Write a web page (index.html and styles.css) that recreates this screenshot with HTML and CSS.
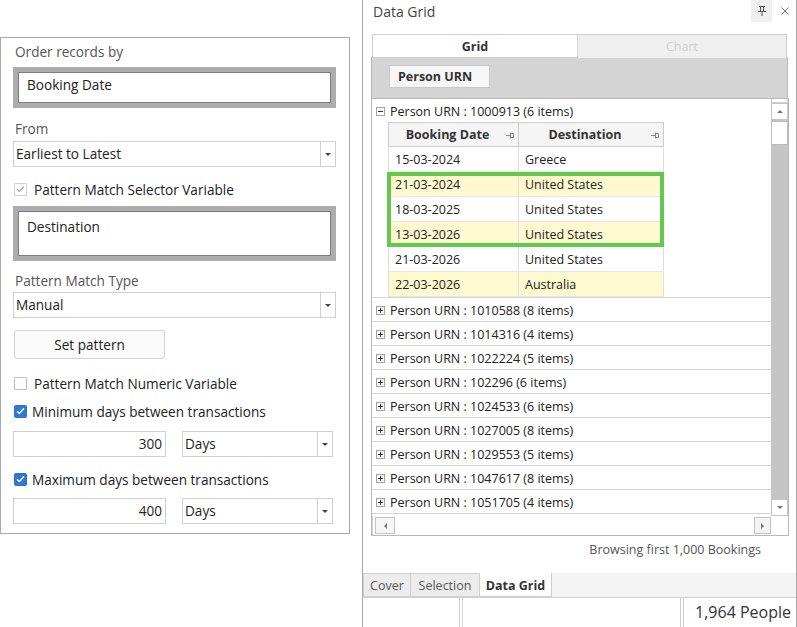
FILE: index.html
```html
<!DOCTYPE html>
<html lang="en">
<head>
    <meta charset="UTF-8">
    <title>Pattern Match - Data Grid</title>
    <link rel="stylesheet" href="styles.css">
</head>
<body>
    <div class="options">
        <div class="label first">Order records by</div>
        <div class="pick-box">Booking Date</div>
        <div class="label from">From</div>
        <div class="combo tight"><span class="combo-text">Earliest to Latest</span><span class="combo-btn"><i class="caret"></i></span></div>
        <div class="check-row selector">
            <span class="check muted"><svg width="9" height="8" viewBox="0 0 9 8"><path d="M1 4.2l2.4 2.3L8 1.3" fill="none" stroke="#9a9a9a" stroke-width="1.1"/></svg></span>
            <span class="check-label">Pattern Match Selector Variable</span>
        </div>
        <div class="pick-box tall">Destination</div>
        <div class="label">Pattern Match Type</div>
        <div class="combo tighter"><span class="combo-text">Manual</span><span class="combo-btn"><i class="caret"></i></span></div>
        <div class="set-pattern">Set pattern</div>
        <div class="check-row numeric">
            <span class="check"></span>
            <span class="check-label">Pattern Match Numeric Variable</span>
        </div>
        <div class="check-row">
            <span class="check on"><svg width="9" height="8" viewBox="0 0 9 8"><path d="M1 4.2l2.4 2.3L8 1.3" fill="none" stroke="#fff" stroke-width="1.3"/></svg></span>
            <span class="check-label near">Minimum days between transactions</span>
        </div>
        <div class="num-row">
            <div class="num">300</div>
            <div class="combo"><span class="combo-text">Days</span><span class="combo-btn"><i class="caret"></i></span></div>
        </div>
        <div class="check-row max">
            <span class="check on"><svg width="9" height="8" viewBox="0 0 9 8"><path d="M1 4.2l2.4 2.3L8 1.3" fill="none" stroke="#fff" stroke-width="1.3"/></svg></span>
            <span class="check-label near">Maximum days between transactions</span>
        </div>
        <div class="num-row last">
            <div class="num">400</div>
            <div class="combo"><span class="combo-text">Days</span><span class="combo-btn"><i class="caret"></i></span></div>
        </div>
    </div>

    <div class="window">
        <div class="title-bar">
            <span class="title">Data Grid</span>
            <span class="pin-btn"><svg width="8" height="10" viewBox="0 0 8 10"><path d="M1 0.5h6M2.5 0.5v5M5.5 0.5v5M0 5.5h8M4 5.5V10" fill="none" stroke="#555" stroke-width="1"/></svg></span>
            <span class="close-btn"><svg width="8" height="8" viewBox="0 0 8 8"><path d="M0.5 0.5l7 7M7.5 0.5l-7 7" stroke="#777" stroke-width="1"/></svg></span>
        </div>
        <div class="dg-body">
            <div class="view-tabs">
                <div class="view-tab active">Grid</div>
                <div class="view-tab">Chart</div>
            </div>
            <div class="group-panel">
                <span class="group-chip">Person URN</span>
            </div>
            <div class="grid">
                <div class="rows">
                    <div class="group open">
                        <div class="group-head"><span class="expander"></span>Person URN : 1000913 (6 items)</div>
                        <div class="detail">
                            <div class="detail-table">
                                <div class="th">Booking Date<svg class="col-pin" width="9" height="7" viewBox="0 0 9 7"><path d="M0 3.5h4.5M4.5 0.5v6M4.5 1.5h3v4h-3" fill="none" stroke="#888" stroke-width="1"/></svg></div>
                                <div class="th">Destination<svg class="col-pin" width="9" height="7" viewBox="0 0 9 7"><path d="M0 3.5h4.5M4.5 0.5v6M4.5 1.5h3v4h-3" fill="none" stroke="#888" stroke-width="1"/></svg></div>
                                <div class="td">15-03-2024</div><div class="td">Greece</div>
                                <div class="td alt">21-03-2024</div><div class="td alt">United States</div>
                                <div class="td">18-03-2025</div><div class="td">United States</div>
                                <div class="td alt">13-03-2026</div><div class="td alt">United States</div>
                                <div class="td">21-03-2026</div><div class="td">United States</div>
                                <div class="td alt">22-03-2026</div><div class="td alt">Australia</div>
                            </div>
                            <div class="match-box"></div>
                        </div>
                    </div>
                    <div class="group"><div class="group-head"><span class="expander plus"></span>Person URN : 1010588 (8 items)</div></div>
                    <div class="group"><div class="group-head"><span class="expander plus"></span>Person URN : 1014316 (4 items)</div></div>
                    <div class="group"><div class="group-head"><span class="expander plus"></span>Person URN : 1022224 (5 items)</div></div>
                    <div class="group"><div class="group-head"><span class="expander plus"></span>Person URN : 102296 (6 items)</div></div>
                    <div class="group"><div class="group-head"><span class="expander plus"></span>Person URN : 1024533 (6 items)</div></div>
                    <div class="group"><div class="group-head"><span class="expander plus"></span>Person URN : 1027005 (8 items)</div></div>
                    <div class="group"><div class="group-head"><span class="expander plus"></span>Person URN : 1029553 (5 items)</div></div>
                    <div class="group"><div class="group-head"><span class="expander plus"></span>Person URN : 1047617 (8 items)</div></div>
                    <div class="group"><div class="group-head"><span class="expander plus"></span>Person URN : 1051705 (4 items)</div></div>
                </div>
                <div class="vscroll">
                    <span class="vs-top"></span>
                    <span class="sb-btn"><i class="arrow up"></i></span>
                    <span class="vs-thumb"></span>
                    <span class="vs-track"></span>
                    <span class="sb-btn"><i class="arrow down"></i></span>
                </div>
                <div class="hscroll">
                    <span class="sb-btn wide"><i class="arrow left"></i></span>
                    <span class="hs-thumb"></span>
                    <span class="sb-btn"><i class="arrow right"></i></span>
                </div>
                <div class="corner"></div>
            </div>
            <div class="footnote">Browsing first 1,000 Bookings</div>
        </div>
        <div class="doc-tabs">
            <span class="doc-tab cover">Cover</span>
            <span class="doc-tab selection">Selection</span>
            <span class="doc-tab active">Data Grid</span>
        </div>
        <div class="status">
            <span class="status-cell first"></span>
            <span class="status-cell mid"></span>
            <span class="status-cell count">1,964 People</span>
        </div>
    </div>
</body>
</html>
```

FILE: styles.css
```css
* {
    box-sizing: border-box;
}

body {
    margin: 0;
    display: flex;
    align-items: flex-start;
    font-family: "Open Sans", "Noto Sans", sans-serif;
    font-size: 12.5px;
    color: #222;
    background: #fff;
}

/* ---- left options panel ---- */

.options {
    width: 350px;
    height: 497px;
    margin-top: 37px;
    padding: 0 13px 0 12px;
    border: 1px solid #a8a8a8;
    font-size: 13.6px;
}

.label {
    height: 16px;
    line-height: 16px;
    margin-top: 12px;
    padding-left: 2px;
    color: #555;
}

.label.first {
    margin-top: 6px;
}

.label.from {
    margin-top: 13px;
}

.pick-box {
    height: 41px;
    margin-top: 7px;
    padding: 4px 9px 0;
    line-height: 18px;
    border: 5px solid #adadad;
    box-shadow: inset 0 0 0 1px #7d7d7d;
    background: #fff;
}

.pick-box.tall {
    height: 55px;
    margin-top: 9px;
    padding-top: 7px;
}

.combo {
    height: 26px;
    display: flex;
    border: 1px solid #d0d0d0;
    background: #fff;
}

.combo.tight {
    margin-top: 4px;
}

.combo.tighter {
    margin-top: 3px;
}

.combo-text {
    flex: 1;
    line-height: 24px;
    padding-left: 2px;
}

.combo-btn {
    width: 15px;
    border-left: 1px solid #d0d0d0;
    display: flex;
    align-items: center;
    justify-content: center;
}

.caret {
    width: 0;
    height: 0;
    border-left: 3px solid transparent;
    border-right: 3px solid transparent;
    border-top: 3px solid #444;
}

.check-row {
    height: 16px;
    margin-top: 12px;
    display: flex;
    align-items: center;
}

.check-row.selector {
    margin-top: 14px;
}

.check-row.numeric {
    margin-top: 16px;
}

.check-row.max {
    margin-top: 14px;
}

.check {
    width: 13px;
    height: 13px;
    margin-left: 1px;
    border: 1px solid #bdbdbd;
    border-radius: 1px;
    background: #fff;
    display: flex;
    align-items: center;
    justify-content: center;
}

.check.muted {
    border-color: #d0d0d0;
}

.check.on {
    border-color: #2a73c9;
    border-radius: 2px;
    background: #2f7ad1;
}

.check-label {
    margin-left: 7px;
}

.check-label.near {
    margin-left: 5px;
}

.set-pattern {
    width: 151px;
    height: 29px;
    margin: 12px 0 0 1px;
    border: 1px solid #d3d3d3;
    border-radius: 3px;
    background: #fbfbfb;
    text-align: center;
    line-height: 27px;
}

.num-row {
    display: grid;
    grid-template-columns: 153px 151px;
    column-gap: 16px;
    margin-top: 12px;
}

.num-row.last {
    margin-top: 11px;
}

.num {
    height: 26px;
    border: 1px solid #d0d0d0;
    text-align: right;
    padding-right: 3px;
    line-height: 24px;
}

/* ---- data grid window ---- */

.window {
    width: 435px;
    height: 627px;
    margin-left: 12px;
    border-left: 1px solid #a8a8a8;
    border-right: 1px solid #a8a8a8;
    display: flex;
    flex-direction: column;
}

.title-bar {
    height: 22px;
    display: flex;
    align-items: center;
}

.title {
    flex: 1;
    padding-left: 10px;
    font-size: 14px;
    color: #444;
}

.pin-btn {
    width: 21px;
    height: 22px;
    background: #efefef;
    display: flex;
    align-items: center;
    justify-content: center;
}

.close-btn {
    width: 24px;
    display: flex;
    justify-content: center;
    padding-left: 2px;
}

.dg-body {
    padding: 12px 7px 0 8px;
}

.view-tabs {
    height: 23px;
    margin: 0 2px 0 1px;
    display: grid;
    grid-template-columns: 204px 1fr;
    border: 1px solid #cfcfcf;
    border-bottom: none;
}

.view-tab {
    text-align: center;
    line-height: 22px;
    padding-top: 1px;
    font-weight: bold;
    color: #333;
}

.view-tab + .view-tab {
    border-left: 1px solid #d6d6d6;
    background: #efefef;
    color: #cfcfcf;
    font-weight: normal;
}

.group-panel {
    height: 41px;
    margin-right: 1px;
    padding: 8px 0 0 17px;
    background: #d4d4d4;
    border-left: 1px solid #b8b8b8;
    border-right: 1px solid #b8b8b8;
}

.group-chip {
    display: inline-block;
    width: 101px;
    height: 23px;
    padding-left: 8px;
    line-height: 21px;
    font-weight: bold;
    color: #333;
    background: #f6f6f6;
    border: 1px solid #c9c9c9;
}

.grid {
    height: 438px;
    display: grid;
    grid-template-columns: 1fr 17px;
    grid-template-rows: 1fr 19px;
    border: 1px solid #b8b8b8;
}

.rows {
    overflow: hidden;
}

.group {
    border-bottom: 1px solid #d2d2d2;
}

.group-head {
    height: 23px;
    display: flex;
    align-items: center;
    padding: 2px 0 0 4px;
}

.expander {
    position: relative;
    width: 9px;
    height: 9px;
    margin-right: 5px;
    border: 1px solid #a3a3a3;
}

.expander::before {
    content: "";
    position: absolute;
    left: 1px;
    top: 3px;
    width: 5px;
    height: 1px;
    background: #333;
}

.expander.plus::after {
    content: "";
    position: absolute;
    left: 3px;
    top: 1px;
    width: 1px;
    height: 5px;
    background: #333;
}

.detail {
    position: relative;
    padding-left: 16px;
}

.detail-table {
    display: grid;
    grid-template-columns: 131px 145px;
    grid-auto-rows: 25px;
}

.th {
    display: flex;
    align-items: center;
    justify-content: center;
    padding-right: 12px;
    font-weight: bold;
    color: #333;
    background: #f5f5f5;
    border: 1px solid #cccccc;
    border-left: none;
    position: relative;
}

.th:first-child {
    border-left: 1px solid #cccccc;
}

.col-pin {
    position: absolute;
    right: 3px;
    top: 9px;
}

.td {
    padding: 1px 0 0 6px;
    line-height: 23px;
    border-right: 1px solid #dedede;
    border-bottom: 1px solid #e6e6e6;
    background: #fff;
}

.td:nth-child(odd) {
    border-left: 1px solid #dedede;
}

.td.alt {
    background: #fff9cf;
}

.match-box {
    position: absolute;
    left: 15px;
    top: 50px;
    width: 277px;
    height: 75px;
    border: 4px solid #62c94e;
}

/* scrollbars */

.vscroll {
    display: flex;
    flex-direction: column;
    background: #c5c5c5;
}

.vs-top {
    height: 4px;
    background: #fff;
    border: 1px solid #cfcfcf;
    border-top: none;
}

.sb-btn {
    height: 17px;
    display: flex;
    align-items: center;
    justify-content: center;
    background: #fff;
    border: 1px solid #c4c4c4;
}

.vs-thumb {
    height: 24px;
    margin-top: 1px;
    background: #fff;
    border: 1px solid #bdbdbd;
}

.vs-track {
    flex: 1;
}

.hscroll {
    display: flex;
    align-items: stretch;
    padding: 1px 0 1px 2px;
    border-left: 1px solid #cfcfcf;
}

.hscroll .sb-btn {
    width: 17px;
    height: auto;
    background: #f3f3f3;
}

.hscroll .sb-btn.wide {
    width: 20px;
    background: #f6f6f6;
}

.hs-thumb {
    flex: 1;
    background: #fff;
}

.corner {
    background: #fff;
}

.arrow {
    width: 0;
    height: 0;
    border: 3px solid transparent;
}

.arrow.up {
    border-bottom-color: #777;
    border-top-width: 0;
}

.arrow.down {
    border-top-color: #777;
    border-bottom-width: 0;
}

.arrow.left {
    border-right-color: #777;
    border-left-width: 0;
}

.arrow.right {
    border-left-color: #777;
    border-right-width: 0;
}

.footnote {
    height: 37px;
    padding: 5px 28px 0 0;
    text-align: right;
    color: #555;
}

/* bottom document tabs and status */

.doc-tabs {
    height: 24px;
    display: flex;
    background: #f4f4f4;
}

.doc-tab {
    padding-top: 2px;
    line-height: 20px;
    text-align: center;
    color: #555;
    background: #ececec;
    border: 1px solid #cfcfcf;
    border-right: none;
}

.doc-tab.cover {
    width: 47px;
}

.doc-tab.selection {
    width: 69px;
}

.doc-tab.active {
    width: 73px;
    padding-top: 3px;
    font-weight: bold;
    color: #333;
    background: #fff;
    border-top: none;
    border-right: 1px solid #cfcfcf;
}

.status {
    flex: 1;
    display: flex;
    gap: 2px;
    border-top: 1px solid #cfcfcf;
}

.status-cell {
    border-left: 1px solid #cfcfcf;
    border-right: 1px solid #cfcfcf;
}

.status-cell.first {
    width: 97px;
    border-left: none;
}

.status-cell.mid {
    width: 219px;
}

.status-cell.count {
    flex: 1;
    border-right: none;
    text-align: right;
    padding-right: 5px;
    font-size: 16px;
    line-height: 28px;
    color: #333;
}
```
